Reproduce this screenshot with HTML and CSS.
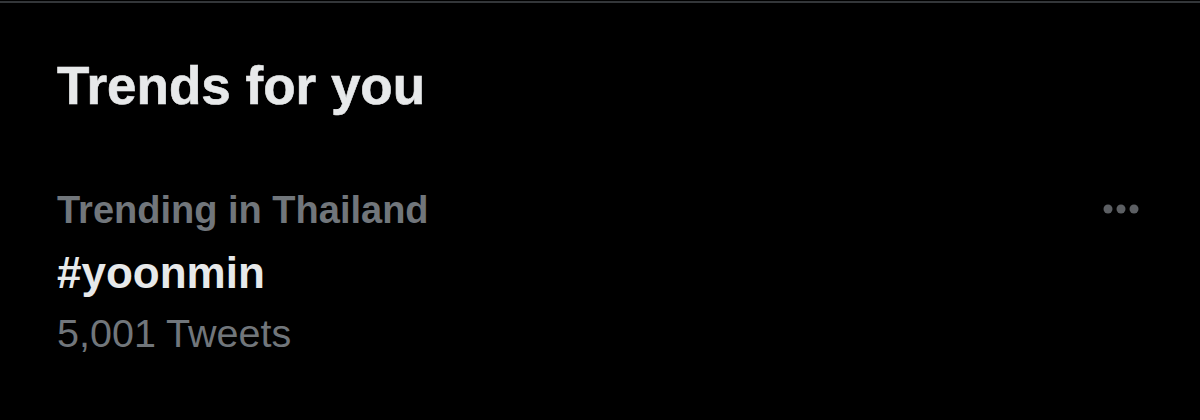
FILE: index.html
```html
<!DOCTYPE html>
<html>
<head>
    <meta charset="utf-8">
    <title>Trends for you</title>
    <link rel="stylesheet" href="styles.css">
</head>
<body>
    <section class="trends">
        <h2 class="trends-title">Trends for you</h2>

        <div class="trend">
            <div class="trend-body">
                <p class="trend-context">Trending in Thailand</p>
                <p class="trend-name">#yoonmin</p>
                <p class="trend-count">5,001 Tweets</p>
            </div>
            <button class="trend-more" aria-label="More">
                <svg viewBox="0 0 40 12" width="40" height="12">
                    <circle cx="6" cy="6" r="4.5"></circle>
                    <circle cx="19" cy="6" r="4.5"></circle>
                    <circle cx="32" cy="6" r="4.5"></circle>
                </svg>
            </button>
        </div>
    </section>
</body>
</html>
```

FILE: styles.css
```css
body {
    margin: 0;
    padding: 0;
    background: #000;
    font-family: "Liberation Sans", Arial, sans-serif;
    color: #e7e9ea;
}

.trends {
    margin-top: 1px;
    border-top: 2px solid #333639;
    height: 417px;
    padding: 53px 58px 0 57px;
    box-sizing: border-box;
}

.trends-title {
    margin: 0;
    font-size: 53px;
    line-height: 60px;
    font-weight: bold;
    -webkit-text-stroke: 0.6px #e7e9ea;
}

.trend {
    display: flex;
    justify-content: space-between;
    align-items: flex-start;
    margin-top: 71px;
}

.trend p {
    margin: 0;
}

.trend-context {
    font-size: 38px;
    line-height: 46px;
    font-weight: bold;
    color: #71767b;
}

.trend-name {
    margin-top: 15px !important;
    font-size: 44px;
    line-height: 50px;
    font-weight: bold;
}

.trend-count {
    margin-top: 12px !important;
    font-size: 39.5px;
    line-height: 46px;
    color: #71767b;
}

.trend-more {
    background: none;
    border: none;
    padding: 0;
    margin-top: 16px;
    fill: #5c5f63;
    cursor: pointer;
}
```
